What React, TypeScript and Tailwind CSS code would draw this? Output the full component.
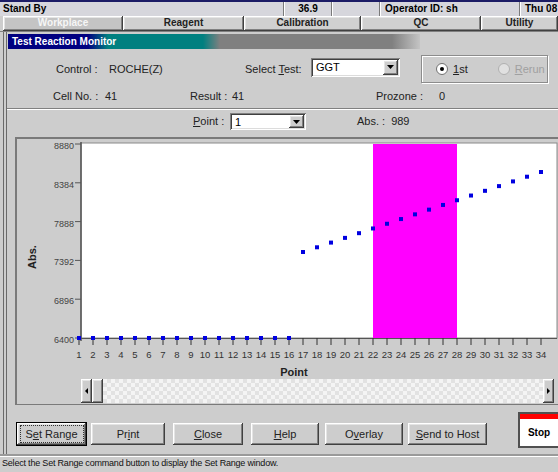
import { type ReactNode } from 'react'

const raised =
  'shadow-[inset_-1px_-1px_#404040,inset_1px_1px_#ffffff,inset_-2px_-2px_#808080,inset_2px_2px_#e4e4e4]'
const sunken =
  'shadow-[inset_1px_1px_#808080,inset_-1px_-1px_#ffffff,inset_2px_2px_#404040,inset_-2px_-2px_#dcdcdc]'

const yTicks = [
  { v: 8880, y: 143 },
  { v: 8384, y: 181.8 },
  { v: 7888, y: 220.6 },
  { v: 7392, y: 259.4 },
  { v: 6896, y: 298.2 },
  { v: 6400, y: 337 },
]

const points = Array.from({ length: 34 }, (_, i) => {
  const n = i + 1
  const x = 78 + i * 14
  const y = n <= 16 ? 337 : 251 - ((n - 17) * 80) / 17
  return { n, x, y }
})

function U({ children }: { children: ReactNode }) {
  return <span className="underline underline-offset-1">{children}</span>
}

function Dropdown({ value, className }: { value: string; className: string }) {
  return (
    <div className={`flex bg-white p-[2px] ${sunken} ${className}`}>
      <div className="flex-1 pl-[3px] text-[11px] leading-[15px] text-black">{value}</div>
      <div className={`w-[15px] bg-[#cdcdcd] flex items-center justify-center ${raised}`}>
        <svg width="7" height="4" viewBox="0 0 7 4">
          <path d="M0 0h7L3.5 4z" fill="#000" />
        </svg>
      </div>
    </div>
  )
}

function Button({ children, className = '', def = false }: { children: ReactNode; className?: string; def?: boolean }) {
  return (
    <div
      className={`h-[22px] flex items-center justify-center bg-[#cdcdcd] text-[11px] text-[#222] ${raised} ${
        def ? 'outline outline-1 outline-black' : ''
      } ${className}`}
    >
      {def ? (
        <span className="px-[5px] border border-dotted border-[#333]">{children}</span>
      ) : (
        children
      )}
    </div>
  )
}

function Radio({ checked, label, disabled }: { checked: boolean; label: ReactNode; disabled?: boolean }) {
  return (
    <div className={`flex items-center gap-[5px] ${disabled ? 'text-[#a0a0a0]' : 'text-[#222]'}`}>
      <svg width="12" height="12" viewBox="0 0 12 12">
        <circle cx="6" cy="6" r="5.5" fill={disabled ? '#e0e0e0' : '#fff'} stroke={disabled ? '#b0b0b0' : '#707070'} />
        {checked && <circle cx="6" cy="6" r="2" fill="#000" />}
      </svg>
      <span>{label}</span>
    </div>
  )
}

function Chart() {
  return (
    <svg width="543" height="240" viewBox="16 138 543 240" className="block">
      <rect x="80" y="142" width="476" height="195" fill="#fff" stroke="#8a8a8a" />
      <rect x="372" y="143" width="84" height="194" fill="#ff00ff" />
      {yTicks.map((t) => (
        <g key={t.v}>
          <line x1="74" x2="80" y1={t.y} y2={t.y} stroke="#555" />
          <text x="73" y={t.y + 5} textAnchor="end" fontSize="9" fill="#444" fontFamily="Liberation Sans, Arial, sans-serif">
            {t.v}
          </text>
        </g>
      ))}
      <line x1="80" x2="80" y1="141" y2="340" stroke="#555" strokeWidth="1.5" />
      <line x1="76" x2="556" y1="337.5" y2="337.5" stroke="#555" strokeWidth="1.2" />
      {points.map((p) => (
        <g key={p.n}>
          <line x1={p.x} x2={p.x} y1="337" y2="344" stroke="#333" />
          <text
            x={p.x}
            y="357"
            textAnchor="middle"
            fontSize="9.5"
            fill="#333"
            fontFamily="Liberation Sans, Arial, sans-serif"
          >
            {p.n}
          </text>
          <rect x={p.x - 2} y={p.y - 2} width="4" height="4" fill="#0000e0" />
        </g>
      ))}
      <text x="293" y="375" textAnchor="middle" fontSize="11" fontWeight="bold" fill="#222" fontFamily="Liberation Sans, Arial, sans-serif">
        Point
      </text>
      <text
        x="35"
        y="256"
        transform="rotate(-90 35 256)"
        textAnchor="middle"
        fontSize="11"
        fontWeight="bold"
        fill="#222"
        fontFamily="Liberation Sans, Arial, sans-serif"
      >
        Abs.
      </text>
    </svg>
  )
}

export default function App() {
  return (
    <div className="w-[558px] h-[472px] overflow-hidden bg-[#cdcdcd] flex flex-col font-['Liberation_Sans',Arial,sans-serif] text-[11px] text-[#222]">
      {/* status strip */}
      <div className="h-[16px] shrink-0 flex border-t-2 border-[#1c1c66] bg-[#d6d6dc] text-[10px] font-bold text-black leading-[13px]">
        <div className="w-[284px] pl-[3px] border-r border-[#7a7a7a]">Stand By</div>
        <div className="w-[48px] text-center border-l border-white border-r border-r-[#7a7a7a]">36.9</div>
        <div className="w-[48px] border-l border-white border-r border-r-[#7a7a7a]" />
        <div className="w-[140px] pl-[4px] border-l border-white border-r border-r-[#7a7a7a]">Operator ID: sh</div>
        <div className="flex-1 pl-[4px] border-l border-white">Thu 08</div>
      </div>
      {/* tabs */}
      <div className="h-[16px] shrink-0 flex pl-[3px] text-[10px] font-bold leading-[14px] border-b border-[#808080]">
        <div className={`w-[120px] text-center text-[#f6f6f6] bg-[#c4c4c4] ${raised}`}>Workplace</div>
        <div className={`w-[121px] text-center bg-[#d0d0d0] ${raised}`}>Reagent</div>
        <div className={`w-[117px] text-center bg-[#d0d0d0] ${raised}`}>Calibration</div>
        <div className={`w-[120px] text-center bg-[#d0d0d0] ${raised}`}>QC</div>
        <div className={`flex-1 text-center bg-[#d0d0d0] ${raised}`}>Utility</div>
      </div>
      {/* window body */}
      <div className="flex-1 flex flex-col ml-[3px] border-l-4 border-double border-[#6a6a6a]">
        <div className="mt-[2px] ml-[1px] w-[412px] h-[15px] shrink-0 pl-[4px] text-[10px] font-bold text-white leading-[15px] bg-[linear-gradient(90deg,#000080_0px,#000080_80px,#008080_100px,#008080_195px,#808080_212px,#808080_384px,#c4c4c4_412px)]">
          Test Reaction Monitor
        </div>

        {/* row 1 */}
        <div className="mt-[6px] h-[28px] shrink-0 flex items-center">
          <div className="ml-[49px] w-[53px] whitespace-nowrap">Control :</div>
          <div className="w-[136px]">ROCHE(Z)</div>
          <div className="w-[66px] whitespace-nowrap">
            Select <U>T</U>est:
          </div>
          <Dropdown value="GGT" className="w-[89px] h-[19px] -mt-[4px]" />
          <div className="ml-[21px] w-[127px] h-[28px] border border-[#8c8c8c] shadow-[inset_1px_1px_#ffffff,1px_1px_#ffffff] flex items-center pl-[14px] gap-[30px]">
            <Radio checked label={<><U>1</U>st</>} />
            <Radio checked={false} disabled label={<><U>R</U>erun</>} />
          </div>
        </div>

        {/* row 2 */}
        <div className="mt-[5px] h-[16px] shrink-0 flex items-center">
          <div className="ml-[46px] w-[52px] whitespace-nowrap">Cell No. :</div>
          <div className="w-[85px]">41</div>
          <div className="w-[42px] whitespace-nowrap">Result :</div>
          <div className="w-[144px]">41</div>
          <div className="w-[63px] whitespace-nowrap">Prozone :</div>
          <div>0</div>
        </div>

        <div className="mt-[4px] h-[2px] shrink-0 border-t border-[#808080] border-b border-b-white" />

        {/* row 3 */}
        <div className="mt-[3px] h-[17px] shrink-0 flex items-center">
          <div className="ml-[186px] w-[37px] whitespace-nowrap">
            <U>P</U>oint :
          </div>
          <Dropdown value="1" className="w-[76px] h-[17px]" />
          <div className="ml-[51px] whitespace-nowrap">Abs. :</div>
          <div className="ml-[6px]">989</div>
        </div>

        {/* chart panel */}
        <div className="mt-[7px] ml-[8px] w-[548px] h-[268px] shrink-0 border-t-2 border-l-2 border-[#7a7a7a] flex flex-col">
          <Chart />
          <div className="ml-[64px] w-[473px] h-[24px] flex">
            <div className={`w-[11px] bg-[#cdcdcd] flex items-center justify-center ${raised}`}>
              <svg width="3" height="6" viewBox="0 0 3 6">
                <path d="M3 0v6L0 3z" fill="#000" />
              </svg>
            </div>
            <div className={`w-[11px] bg-[#cdcdcd] ${raised}`} />
            <div className="flex-1 bg-[repeating-conic-gradient(#e2e2e2_0%_25%,#f4f4f4_0%_50%)] bg-[length:8px_8px]" />
            <div className={`w-[11px] bg-[#cdcdcd] flex items-center justify-center ${raised}`}>
              <svg width="3" height="6" viewBox="0 0 3 6">
                <path d="M0 0v6L3 3z" fill="#000" />
              </svg>
            </div>
          </div>
          <div className="flex-1 border-b border-[#7a7a7a]" />
        </div>

        {/* buttons */}
        <div className="flex-1 flex items-start">
          <div className="mt-[18px] ml-[10px] flex gap-[5px]">
            <Button def className="w-[69px]">
              S<U>e</U>t Range
            </Button>
            <Button className="w-[74px]">
              Pr<U>i</U>nt
            </Button>
            <Button className="w-[70px] ml-[3px]">
              <U>C</U>lose
            </Button>
            <Button className="w-[68px] ml-[3px]">
              <U>H</U>elp
            </Button>
            <Button className="w-[78px] ml-[1px]">
              O<U>v</U>erlay
            </Button>
            <Button className="w-[79px]">
              <U>S</U>end to Host
            </Button>
          </div>
          <div className="mt-[7px] ml-[31px] w-[45px] h-[36px] bg-white border-2 border-[#505050] border-r-0 flex flex-col">
            <div className="h-[5px] bg-[#ff0000]" />
            <div className="flex-1 flex items-center justify-center text-[10px] font-bold text-black">Stop</div>
          </div>
        </div>
      </div>
      {/* bottom status */}
      <div className="h-[18px] shrink-0 border-t-2 border-[#9a9a9a] shadow-[inset_0_1px_#ffffff] pl-[2px] text-[9px] tracking-[-0.2px] leading-[15px] text-[#111]">
        Select the Set Range command button to display the Set Range window.
      </div>
    </div>
  )
}
